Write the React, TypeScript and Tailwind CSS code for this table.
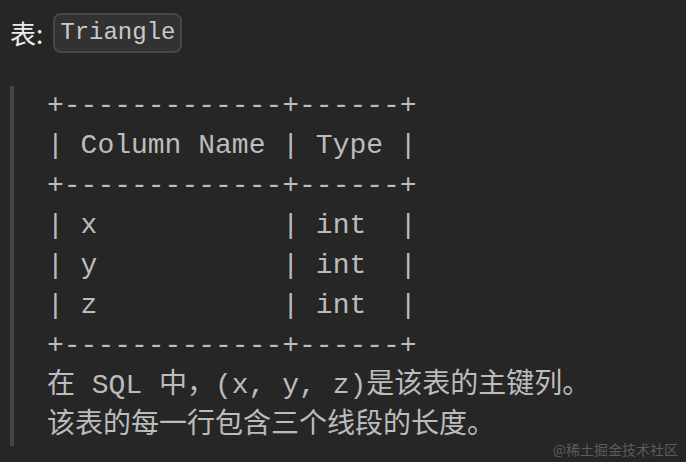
import React from "react";

const lines = [
  "+-------------+------+",
  "| Column Name | Type |",
  "+-------------+------+",
  "| x           | int  |",
  "| y           | int  |",
  "| z           | int  |",
  "+-------------+------+",
  "在 SQL 中，(x, y, z)是该表的主键列。",
  "该表的每一行包含三个线段的长度。",
];

export default function App() {
  return (
    <div className="relative w-[686px] h-[462px] bg-[#262626] overflow-hidden">
      <div className="flex items-center pl-[10px] pt-[13px] gap-[10px]">
        <span className="font-['Noto_Sans_CJK_SC','Noto_Sans',sans-serif] text-[26px] leading-[40px] text-[#ececec]">
          表:
        </span>
        <span className="font-['Liberation_Mono',monospace] h-[40px] px-[5px] flex items-center rounded-[8px] border-2 border-[#474747] bg-[#323232] text-[24px] text-[#c9c9c9]">
          Triangle
        </span>
      </div>
      <div className="mt-[33px] ml-[10px] border-l-4 border-[#454545] pl-[33px]">
        <pre className="font-['Liberation_Mono','Noto_Sans_CJK_SC',monospace] m-0 text-[28px] leading-[40px] text-[#bcbcbc] whitespace-pre">
          {lines.join("\n")}
        </pre>
      </div>
      <div className="font-['Noto_Sans_CJK_SC',sans-serif] absolute right-[8px] bottom-[4px] text-[14px] leading-[18px] text-[#5c5c5c]">
        @稀土掘金技术社区
      </div>
    </div>
  );
}
